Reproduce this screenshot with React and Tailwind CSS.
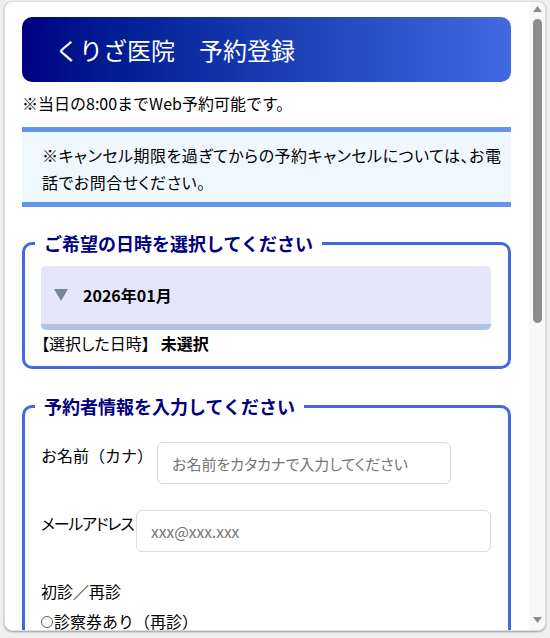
import React from "react";

export default function App() {
  return (
    <div className="w-[550px] h-[638px] overflow-hidden bg-[#efefef] pt-[1px] pl-[4px] font-['Noto_Sans_CJK_JP','Noto_Sans',sans-serif]">
      <div className="w-[542px] h-[630px] bg-white rounded-[8px] border border-[#dcdcdc] shadow-[0_1px_2px_rgba(0,0,0,0.35)] flex overflow-hidden">
        {/* content */}
        <div className="flex-1 min-w-0 pl-[17px] pr-[18px] pt-[15px] text-[16px] leading-[27px] text-black">
          <div className="h-[65px] rounded-[10px] bg-linear-to-r from-[#000080] to-[#4169e1] flex items-center pl-[33px] text-white text-[24px] leading-none">
            くりざ医院　予約登録
          </div>

          <p className="mt-[8px]">※当日の8:00までWeb予約可能です。</p>

          <div className="mt-[10px] border-y-[5px] border-[#6495ed] bg-[#f0f8ff] pl-[20px] pr-[10px] pt-[10px] pb-[6px] whitespace-nowrap [font-feature-settings:'palt'] tracking-[0.5px]">
            ※キャンセル期限を過ぎてからの予約キャンセルについては、お電
            <br />
            話でお問合せください。
          </div>

          <fieldset className="mt-[23px] border-[3px] border-[#4169e1] rounded-[10px] pl-[16px] pr-[17px] pt-[10px] pb-[9px]">
            <legend className="ml-[-6px] px-[9px] text-[18px] leading-[26px] font-bold text-[#000080]">
              ご希望の日時を選択してください
            </legend>
            <div className="h-[64px] rounded-[5px] bg-[#e6e6fa] border-b-[6px] border-[#b0c4de] flex items-center pl-[13px]">
              <svg width="14" height="12" viewBox="0 0 14 12">
                <path d="M0 0 L14 0 L7 12 Z" fill="#778899" />
              </svg>
              <span className="ml-[15px] font-bold">2026年01月</span>
            </div>
            <div className="[font-feature-settings:'palt']">
              【選択した日時】<span className="ml-[11px] font-bold">未選択</span>
            </div>
          </fieldset>

          <fieldset className="mt-[24px] border-[3px] border-[#4169e1] rounded-[10px] pl-[16px] pr-[17px] pt-[10px] pb-[20px]">
            <legend className="ml-[-6px] px-[9px] text-[18px] leading-[26px] font-bold text-[#000080]">
              予約者情報を入力してください
            </legend>
            <div className="mt-[13px] flex items-start">
              <label className="w-[116px] shrink-0 whitespace-nowrap">お名前（カナ）</label>
              <input
                type="text"
                placeholder="お名前をカタカナで入力してください"
                className="w-[294px] h-[42px] border border-[#dcdcdc] rounded-[6px] px-[14px] text-[15px] outline-none [font-feature-settings:'palt'] placeholder:text-[#757575]"
              />
            </div>
            <div className="mt-[26px] flex items-start">
              <label className="w-[95px] shrink-0 whitespace-nowrap [font-feature-settings:'palt'] tracking-[-1.2px]">
                メールアドレス
              </label>
              <input
                type="email"
                placeholder="xxx@xxx.xxx"
                className="flex-1 min-w-0 h-[42px] border border-[#dcdcdc] rounded-[6px] px-[14px] text-[15.5px] outline-none placeholder:text-[#757575]"
              />
            </div>
            <div className="mt-[26px]">初診／再診</div>
            <div className="mt-[3px] flex items-center">
              <span className="w-[12px] h-[12px] rounded-full border border-[#5f5f5f] bg-white shrink-0" />
              <span className="ml-[1px]">診察券あり（再診）</span>
            </div>
          </fieldset>
        </div>

        {/* scrollbar */}
        <div className="w-[16px] shrink-0 bg-[#f8f8f8] flex flex-col items-center">
          <svg className="mt-[4px]" width="9" height="6" viewBox="0 0 9 6">
            <path d="M4.5 0 L9 6 L0 6 Z" fill="#8c8c8c" />
          </svg>
          <div className="mt-[7px] w-[9px] h-[304px] rounded-full bg-[#8c8c8c]" />
          <div className="flex-1" />
          <svg className="mb-[7px]" width="9" height="6" viewBox="0 0 9 6">
            <path d="M0 0 L9 0 L4.5 6 Z" fill="#8c8c8c" />
          </svg>
        </div>
      </div>
    </div>
  );
}
